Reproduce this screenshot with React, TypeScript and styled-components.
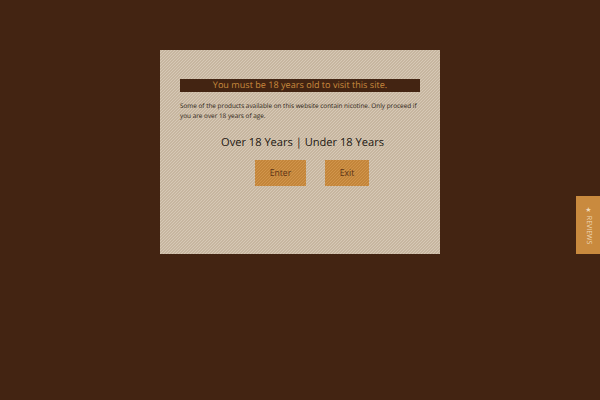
import styled, { createGlobalStyle } from "styled-components";

const GlobalStyle = createGlobalStyle`
  html, body {
    margin: 0;
    height: 100%;
    background-color: #432412;
    font-family: "Open Sans", sans-serif;
    text-rendering: geometricPrecision;
  }
  #root {
    height: 100%;
  }
`;

const Page = styled.div`
  width: 600px;
  height: 400px;
  overflow: hidden;
  position: relative;
  display: flex;
  justify-content: center;
  align-items: flex-start;
  padding-top: 50px;
  box-sizing: border-box;
`;

const Modal = styled.div`
  width: 280px;
  height: 204px;
  box-sizing: border-box;
  padding: 29px 20px 0;
  background-color: #cdbda8;
  background-image: repeating-linear-gradient(
    135deg,
    #d7c9b6 0px,
    #d7c9b6 0.7071px,
    #c7b6a0 0.7071px,
    #c7b6a0 2.1213px
  );
`;

const Banner = styled.h2`
  margin: 0;
  height: 13px;
  line-height: 12px;
  background-color: #432412;
  color: #c98a3e;
  font-size: 9.1px;
  font-weight: 400;
  text-align: center;
`;

const Notice = styled.p`
  margin: 9px 0 0;
  color: #2a1c14;
  font-size: 6.4px;
  line-height: 9.5px;
`;

const Question = styled.div`
  margin-top: 15px;
  padding-left: 5px;
  color: #1c1611;
  font-size: 11.1px;
  line-height: 16px;
  text-align: center;
`;

const Buttons = styled.div`
  display: flex;
  margin-top: 9px;
  padding-left: 75px;
  gap: 19px;
`;

const Button = styled.button<{ $width: number }>`
  width: ${(props) => props.$width}px;
  height: 26px;
  padding: 0;
  border: 0;
  background-color: #c98a3e;
  background-image: repeating-linear-gradient(
    135deg,
    #d1954c 0px,
    #d1954c 0.7071px,
    #c3853a 0.7071px,
    #c3853a 2.1213px
  );
  color: #5a3216;
  font-family: inherit;
  font-size: 8.6px;
`;

const ReviewsTab = styled.div`
  position: absolute;
  right: 0;
  top: 196px;
  width: 24px;
  height: 58px;
  display: flex;
  align-items: center;
  justify-content: center;
  background-color: #c98a3e;
  color: #eed8b8;
  font-size: 7px;
  writing-mode: vertical-rl;
  white-space: nowrap;
`;

export default function App() {
  return (
    <Page>
      <GlobalStyle />
      <Modal>
        <Banner>You must be 18 years old to visit this site.</Banner>
        <Notice>
          Some of the products available on this website contain nicotine. Only proceed if you are over 18 years of age.
        </Notice>
        <Question>Over 18 Years | Under 18 Years</Question>
        <Buttons>
          <Button $width={51}>Enter</Button>
          <Button $width={44}>Exit</Button>
        </Buttons>
      </Modal>
      <ReviewsTab>★ REVIEWS</ReviewsTab>
    </Page>
  );
}
